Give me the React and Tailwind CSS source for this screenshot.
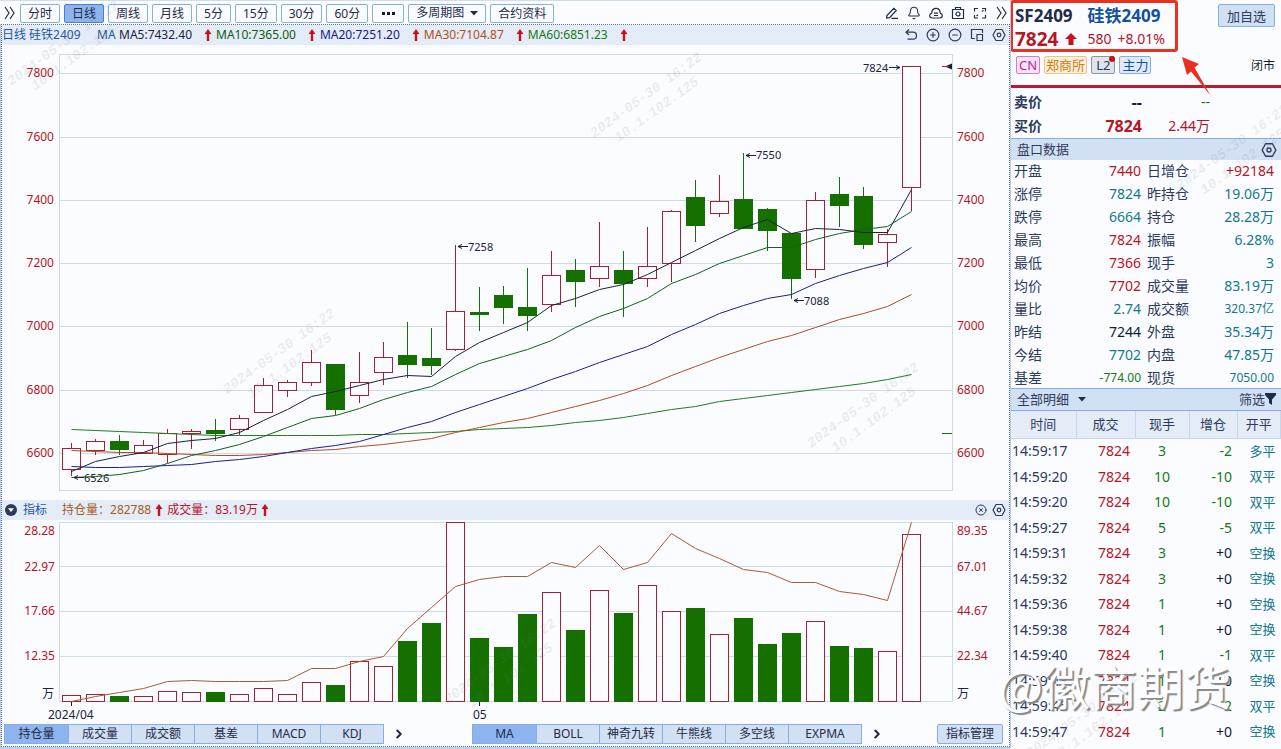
import { Bell, ChevronRight, CircleMinus, CirclePlus, CircleX } from "lucide-react";

const RED = "#a8202f";
const GREEN = "#157000";

const periods = ["分时", "日线", "周线", "月线", "5分", "15分", "30分", "60分"];

const averages = [
    { label: "MA5:7432.40", color: "text-[#1a2340]" },
    { label: "MA10:7365.00", color: "text-[#0f5d0f]" },
    { label: "MA20:7251.20", color: "text-[#16168a]" },
    { label: "MA30:7104.87", color: "text-[#b0501c]" },
    { label: "MA60:6851.23", color: "text-[#147a14]" },
];

// [up, high, top, bottom, low]
const candles = [
    [1, 443, 448, 469, 476],
    [1, 439, 441, 450, 455],
    [0, 435, 441, 450, 455],
    [1, 440, 445, 453, 454],
    [1, 429, 433, 454, 463],
    [1, 429, 431, 433, 449],
    [0, 419, 430, 434, 441],
    [1, 415, 418, 429, 435],
    [1, 378, 385, 412, 412],
    [1, 380, 382, 390, 397],
    [1, 350, 362, 382, 386],
    [0, 364, 364, 410, 415],
    [1, 352, 382, 395, 403],
    [1, 342, 357, 372, 385],
    [0, 322, 355, 365, 378],
    [0, 328, 358, 366, 375],
    [1, 245, 311, 349, 351],
    [0, 287, 312, 315, 331],
    [0, 286, 295, 308, 324],
    [0, 268, 307, 316, 331],
    [1, 251, 275, 304, 312],
    [0, 259, 270, 282, 307],
    [1, 222, 266, 278, 287],
    [0, 251, 270, 284, 317],
    [1, 227, 266, 278, 287],
    [1, 210, 211, 263, 282],
    [0, 180, 197, 226, 242],
    [1, 175, 201, 213, 217],
    [0, 153, 199, 229, 229],
    [0, 208, 209, 231, 251],
    [0, 233, 233, 279, 299],
    [1, 192, 200, 269, 278],
    [0, 177, 194, 206, 227],
    [0, 187, 196, 245, 249],
    [1, 229, 234, 242, 267],
    [1, 66, 66, 187, 211],
];

const lines = [
    {
        stroke: "#257d1c",
        ys: [429, 430, 431, 432, 433, 434, 435, 435, 435, 435, 435, 435, 434, 434, 433, 432, 431, 429, 428, 427, 425, 422, 420, 417, 413, 409, 406, 401, 398, 395, 392, 389, 386, 383, 379, 374],
    },
    {
        stroke: "#b0501c",
        ys: [450, 451, 452, 452, 453, 454, 455, 455, 454, 452, 450, 449, 446, 444, 441, 438, 432, 427, 422, 418, 412, 406, 400, 393, 385, 375, 366, 357, 349, 341, 335, 327, 319, 313, 306, 294],
    },
    {
        stroke: "#1d1d96",
        ys: [466, 467, 467, 466, 465, 464, 461, 459, 456, 452, 448, 445, 441, 434, 427, 421, 412, 404, 396, 388, 379, 371, 362, 354, 346, 334, 324, 313, 305, 298, 294, 283, 275, 268, 262, 247],
    },
    {
        stroke: "#176017",
        ys: [477, 476, 474, 470, 463, 455, 450, 444, 436, 427, 418, 415, 408, 399, 392, 386, 374, 363, 356, 349, 340, 327, 316, 308, 298, 283, 274, 263, 255, 247, 247, 239, 233, 229, 226, 211],
    },
    {
        stroke: "#1a2340",
        ys: [471, 461, 456, 452, 443, 440, 438, 432, 420, 409, 396, 391, 385, 379, 375, 376, 356, 342, 332, 322, 305, 298, 289, 284, 274, 262, 250, 238, 227, 219, 233, 228, 229, 232, 232, 189],
    },
];

const volumes = [695, 694, 696, 696, 691, 692, 692, 694, 688, 694, 682, 685, 661, 666, 641, 623, 522, 638, 647, 614, 592, 630, 590, 613, 585, 611, 608, 634, 618, 644, 633, 621, 646, 648, 651, 534];
const openInterest = [701, 696, 692, 688, 681, 680, 681, 681, 681, 680, 668, 668, 661, 656, 628, 607, 586, 579, 576, 576, 562, 567, 545, 569, 562, 533, 548, 558, 569, 572, 582, 582, 591, 594, 600, 522];

const priceTicks = [
    [7800, 73],
    [7600, 137],
    [7400, 200],
    [7200, 263],
    [7000, 326],
    [6800, 390],
    [6600, 453],
];

const volumeTicks = [
    ["28.28", "89.35", 531],
    ["22.97", "67.01", 567],
    ["17.66", "44.67", 611],
    ["12.35", "22.34", 656],
];

const quotes = [
    ["开盘", "7440", "red", "日增仓", "+92184", "red"],
    ["涨停", "7824", "teal", "昨持仓", "19.06万", "teal"],
    ["跌停", "6664", "teal", "持仓", "28.28万", "teal"],
    ["最高", "7824", "red", "振幅", "6.28%", "teal"],
    ["最低", "7366", "red", "现手", "3", "teal"],
    ["均价", "7702", "red", "成交量", "83.19万", "teal"],
    ["量比", "2.74", "teal", "成交额", "320.37亿", "tealSmall"],
    ["昨结", "7244", "dark", "外盘", "35.34万", "teal"],
    ["今结", "7702", "teal", "内盘", "47.85万", "teal"],
    ["基差", "-774.00", "green", "现货", "7050.00", "tealSmall"],
];

const tones = {
    red: "text-[#b81424] text-sm",
    teal: "text-[#14788c] text-sm",
    tealSmall: "text-[#14788c] text-xs",
    dark: "text-[#141c33] text-sm",
    green: "text-[#147a14] text-xs",
};

const trades = [
    ["14:59:17", 3, "-2", "多平"],
    ["14:59:20", 10, "-10", "双平"],
    ["14:59:20", 10, "-10", "双平"],
    ["14:59:27", 5, "-5", "双平"],
    ["14:59:31", 3, "+0", "空换"],
    ["14:59:32", 3, "+0", "空换"],
    ["14:59:36", 1, "+0", "空换"],
    ["14:59:38", 1, "+0", "空换"],
    ["14:59:40", 1, "-1", "双平"],
    ["14:59:43", 1, "+0", "空换"],
    ["14:59:45", 2, "-2", "双平"],
    ["14:59:47", 1, "+0", "空换"],
];

const stamps = [
    [11, 86],
    [594, 138],
    [227, 394],
    [811, 448],
    [448, 704],
    [1180, 190],
    [1030, 758],
];

const centerX = (i) => 71.5 + i * 24;
const toPoints = (ys) => ys.map((y, i) => `${centerX(i)},${y + 0.5}`).join(" ");

const Icon = ({ children, className = "size-[14px]" }) => (
    <svg
        viewBox="0 0 14 14"
        className={className}
        fill="none"
        stroke="currentColor"
        strokeWidth="1.2"
        aria-hidden="true"
    >
        {children}
    </svg>
);

const HexIcon = ({ className }) => (
    <Icon className={className}>
        <path d="M4 1.5h6L13 7l-3 5.5H4L1 7z" strokeLinejoin="round" />
        <circle cx="7" cy="7" r="1.8" />
    </Icon>
);

const DoubleChevron = () => (
    <Icon>
        <path d="M2 1l4 6-4 6M7 1l4 6-4 6" />
    </Icon>
);

const UpArrow = ({ className = "" }) => (
    <svg viewBox="0 0 8 12" className={`h-3 w-2 shrink-0 ${className}`} aria-hidden="true">
        <path d="M4 0 7.5 5H5.2v7H2.8V5H.5z" fill="#c4121f" />
    </svg>
);

const Caret = ({ className = "" }) => (
    <svg viewBox="0 0 8 5" className={`h-[5px] w-2 shrink-0 ${className}`} aria-hidden="true">
        <path d="M0 0h8L4 4.6z" fill="#1f2b48" />
    </svg>
);

const IconButton = ({ label, children }) => (
    <button type="button" aria-label={label} className="flex size-[14px] items-center justify-center">
        {children}
    </button>
);

const Toolbar = () => (
    <div className="flex h-6 items-center border-t border-[#cfdcee] px-px pt-px text-[#1f2b48]">
        <button type="button" aria-label="展开" className="mr-px w-[18px] pl-[2px]">
            <DoubleChevron />
        </button>
        <div className="flex gap-1 whitespace-nowrap">
            {periods.map((item) => (
                <button
                    key={item}
                    type="button"
                    className={`h-[19px] rounded-xs border px-[7px] leading-[17px] ${
                        item === "日线"
                            ? "border-[#4a80c8] bg-[#8db4ee]"
                            : "border-[#86b0dc] bg-[#fafcff]"
                    }`}
                >
                    {item}
                </button>
            ))}
            <button
                type="button"
                aria-label="更多周期"
                className="flex h-[19px] w-8 items-center justify-center gap-[2px] rounded-xs border border-[#86b0dc]"
            >
                <i className="size-[3px] bg-[#141c33]"></i>
                <i className="size-[3px] bg-[#141c33]"></i>
                <i className="size-[3px] bg-[#141c33]"></i>
            </button>
            <label className="flex h-[19px] items-center rounded-xs border border-[#86b0dc] px-[7px]">
                <select aria-label="多周期图" className="w-[54px] appearance-none outline-none">
                    <option>多周期图</option>
                </select>
                <Caret />
            </label>
            <button type="button" className="h-[19px] rounded-xs border border-[#86b0dc] px-[7px] leading-[17px]">
                合约资料
            </button>
        </div>
        <div className="ml-auto flex items-center gap-2">
            <IconButton label="画线">
                <Icon>
                    <path d="M2 9.5 8.8 2.3l2.4 2.2L4.6 11.600 1.600 12zM6.500 12.400H13" />
                </Icon>
            </IconButton>
            <IconButton label="预警">
                <Bell className="size-[14px]" strokeWidth={1.8} />
            </IconButton>
            <IconButton label="云">
                <Icon>
                    <path d="M3.400 12C1.700 12 .700 10.900.700 9.600c0-1.200.800-2.100 2-2.500C3 4.300 4.800 2.300 7 2.300s4 2 4.300 4.800c1.200.400 2 1.300 2 2.500 0 1.300-1 2.400-2.700 2.400zM5 7.200h4M5 9.500h4" />
                </Icon>
            </IconButton>
            <IconButton label="截图">
                <Icon>
                    <path d="M1.500 3.500h11v9h-11zM4.500 3.500v-2h5v2" />
                    <circle cx="7" cy="8" r="2" />
                </Icon>
            </IconButton>
            <IconButton label="全屏">
                <Icon>
                    <path d="M1.500 5.500v-3h3.500M9 2.500h3.500v3M12.500 9v3H9M5 12H1.500V9" />
                    <path d="M9 5.500l1.500-1.200M5 8.800l-1.500 1.200" />
                </Icon>
            </IconButton>
            <IconButton label="收起">
                <DoubleChevron />
            </IconButton>
        </div>
    </div>
);

const AverageBar = () => (
    <div className="flex h-5 items-center bg-[#e4ecf7] whitespace-nowrap">
        <span className="w-[95px] text-[#1d56a0]">日线 硅铁2409</span>
        <span className="w-[22px] text-[#1d56a0]">MA</span>
        {averages.map((item) => (
            <span key={item.label} className={`flex items-center ${item.color}`}>
                {item.label}
                <UpArrow className="ml-3 mr-1" />
            </span>
        ))}
        <div className="ml-auto flex gap-2 pr-[3px] text-[#2c3a5c]">
            <IconButton label="撤销">
                <Icon>
                    <path d="M5 1.500 2 4.200 5 7M2.200 4.200H9a3.400 3.400 0 0 1 0 7H3.500" />
                </Icon>
            </IconButton>
            <IconButton label="放大">
                <CirclePlus className="size-[14px]" strokeWidth={2} />
            </IconButton>
            <IconButton label="缩小">
                <CircleMinus className="size-[14px]" strokeWidth={2} />
            </IconButton>
            <IconButton label="窗口">
                <Icon>
                    <path d="M5 10.500H1.500v-9h11V5M7 6.500h5.500v6H7z" />
                </Icon>
            </IconButton>
            <IconButton label="设置">
                <HexIcon />
            </IconButton>
        </div>
    </div>
);

const PriceChart = () => (
    <svg viewBox="2 45 1007 455" className="block h-auto w-full" fill="none" role="img" aria-label="硅铁2409 日线">
        <g stroke="#cddae9" shapeRendering="crispEdges">
            <rect x="59.5" y="54.5" width="893" height="436" />
            {priceTicks.map(([price, y]) => (
                <path key={price} d={`M60 ${y + 0.5}H952`} />
            ))}
        </g>
        <g fontSize="12" fill="#b81424">
            {priceTicks.map(([price, y]) => (
                <g key={price}>
                    <text x="54" y={y + 4} textAnchor="end">{price}</text>
                    <text x="957" y={y + 4}>{price}</text>
                </g>
            ))}
        </g>
        <g shapeRendering="crispEdges">
            {candles.map(([up, high, top, bottom, low], i) => {
                const x = centerX(i);
                const color = up ? RED : GREEN;
                return (
                    <g key={i} stroke={color}>
                        <path d={`M${x} ${high}V${top}M${x} ${bottom}V${low}`} fill="none" />
                        <rect
                            x={x - 9}
                            y={top + 0.5}
                            width="18"
                            height={up ? bottom - top : bottom - top - 1}
                            fill={up ? "#fafcff" : color}
                        />
                    </g>
                );
            })}
        </g>
        {lines.map((line) => (
            <polyline key={line.stroke} points={toPoints(line.ys)} stroke={line.stroke} />
        ))}
        <g fontSize="11" fill="#1a2340">
            <text x="84" y="482">6526</text>
            <text x="468" y="251">7258</text>
            <text x="756" y="159">7550</text>
            <text x="804" y="305">7088</text>
            <text x="863" y="72">7824</text>
        </g>
        <path
            d="M84 477.5H74M78 475.5l-4 2 4 2M468 246.5H458M462 244.5l-4 2 4 2M756 155.5H746M750 153.5l-4 2 4 2M804 300.5H794M798 298.5l-4 2 4 2M889 67.5h11M896 65.5l4 2-4 2"
            stroke="#1a2340"
        />
        <path d="M945 66.5 952 63.5v6z" fill="#141c33" />
        <path d="M942 66.5h7" stroke={RED} />
        <path d="M942 433.5h10" stroke={GREEN} />
    </svg>
);

const IndicatorBar = () => (
    <div className="flex h-5 items-center bg-[#e4ecf7] pl-[3px] pr-[3px] whitespace-nowrap">
        <button type="button" aria-label="折叠指标" className="flex size-3 items-center justify-center rounded-full bg-[#2c3a5c]">
            <svg viewBox="0 0 8 5" className="h-1 w-[6px]" aria-hidden="true">
                <path d="M0 0h8L4 5z" fill="#fff" />
            </svg>
        </button>
        <span className="ml-[6px] text-[#1d56a0]">指标</span>
        <span className="ml-[15px] text-[#a85c1c]">持仓量：282788</span>
        <UpArrow className="mx-1" />
        <span className="text-[#b81424]">成交量：83.19万</span>
        <UpArrow className="ml-[3px]" />
        <div className="ml-auto flex gap-1 text-[#2c3a5c]">
            <IconButton label="关闭指标">
                <CircleX className="size-3" strokeWidth={2} />
            </IconButton>
            <IconButton label="指标设置">
                <HexIcon />
            </IconButton>
        </div>
    </div>
);

const VolumeChart = () => (
    <svg viewBox="2 520 1007 204" className="block h-auto w-full" fill="none" role="img" aria-label="成交量与持仓量">
        <g stroke="#cddae9" shapeRendering="crispEdges">
            <rect x="59.5" y="522.5" width="893" height="179" />
            <path d="M60 566.5H952M60 611.5H952M60 656.5H952" />
        </g>
        <g fontSize="12" fill="#b81424">
            {volumeTicks.map(([left, right, y]) => (
                <g key={left}>
                    <text x="55" y={y + 4} textAnchor="end">{left}</text>
                    <text x="957" y={y + 4}>{right}</text>
                </g>
            ))}
        </g>
        <g shapeRendering="crispEdges">
            {volumes.map((y, i) => (
                <rect
                    key={i}
                    x={centerX(i) - 9}
                    y={y + 0.5}
                    width="18"
                    height={701 - y}
                    stroke={candles[i][0] ? RED : GREEN}
                    fill={candles[i][0] ? "#fafcff" : GREEN}
                />
            ))}
            <path d="M71.5 702v4M479.5 702v4" stroke="#141c33" />
        </g>
        <polyline points={toPoints(openInterest)} stroke="#a85c2c" />
        <g fontSize="12" fill="#1a2340">
            <text x="42" y="698">万</text>
            <text x="957" y="698">万</text>
            <text x="48" y="719">2024/04</text>
            <text x="473" y="719">05</text>
        </g>
    </svg>
);

const TabGroup = ({ items }) => (
    <div className="flex h-5 border border-[#86aee2] bg-[#d2e0f4]" role="tablist">
        {items.map((item, index) => (
            <button
                key={item}
                type="button"
                role="tab"
                aria-selected={index === 0}
                className={`leading-[18px] ${item === "EXPMA" ? "w-[73px]" : "w-[63px]"} ${
                    index === 0 ? "bg-[#8db4ee]" : "border-l border-[#86aee2]"
                }`}
            >
                {item}
            </button>
        ))}
    </div>
);

const BottomTabs = () => (
    <div className="flex items-center pb-[2px] pl-[2px] pr-[6px] whitespace-nowrap text-[#1f2b48]">
        <TabGroup items={["持仓量", "成交量", "成交额", "基差", "MACD", "KDJ"]} />
        <button type="button" aria-label="更多指标" className="ml-2">
            <ChevronRight className="size-[14px]" strokeWidth={3.5} />
        </button>
        <div className="ml-[66px]">
            <TabGroup items={["MA", "BOLL", "神奇九转", "牛熊线", "多空线", "EXPMA"]} />
        </div>
        <button type="button" aria-label="更多主图指标" className="ml-2">
            <ChevronRight className="size-[14px]" strokeWidth={3.5} />
        </button>
        <button type="button" className="ml-auto h-5 rounded-xs border border-[#86aee2] bg-[#d2e0f4] px-2 leading-[18px]">
            指标管理
        </button>
    </div>
);

const QuoteHeader = () => (
    <header className="relative flex justify-between pb-[11px] pl-1 pr-[6px] pt-1 whitespace-nowrap">
        <div>
            <div className="flex gap-[15px] text-[17px] leading-[23px] font-bold">
                <span className="text-[#1f2b48]">SF2409</span>
                <span className="text-[#1450a0]">硅铁2409</span>
            </div>
            <div className="flex items-center text-sm leading-6 text-[#b81424]">
                <span className="text-[19px] font-bold">7824</span>
                <svg viewBox="0 0 12 12" className="ml-[7px] size-3" aria-hidden="true">
                    <path d="M6 0 12 6H8.500v6h-5V6H0z" fill="#c4121f" />
                </svg>
                <span className="ml-[10px]">580</span>
                <span className="ml-[6px]">+8.01%</span>
            </div>
            <div className="mt-[5px] flex gap-1 pl-px leading-4">
                <span className="rounded-xs border border-[#dc78c8] bg-[#fbe4f6] px-[2px] text-[13px] text-[#c020a0]">CN</span>
                <span className="rounded-xs border border-[#ecc48c] bg-[#fdf0dc] px-px text-[13px] text-[#d07c10]">郑商所</span>
                <span className="relative rounded-xs border border-[#8c96aa] bg-[#dfe4ec] px-1 text-[13px] text-[#2c3a5c]">
                    L2
                    <i className="absolute -top-px -right-px size-[6px] rounded-full bg-[#c4121f]"></i>
                </span>
                <span className="rounded-xs border border-[#86b0dc] bg-[#dfebfb] px-[2px] text-[13px] text-[#1450a0]">主力</span>
            </div>
        </div>
        <div className="flex flex-col items-end justify-between">
            <button type="button" className="h-[23px] rounded-xs border border-[#86b0dc] bg-[#d2e0f4] px-2 text-[13px] leading-5 text-[#2c3a5c]">
                加自选
            </button>
            <span className="text-[#141c33]">闭市</span>
        </div>
        <svg viewBox="1011 0 270 100" className="pointer-events-none absolute top-0 left-0 h-[100px] w-[270px] overflow-visible" aria-hidden="true">
            <rect x="1011.5" y="1.5" width="165" height="49" rx="2" fill="none" stroke="#e8321f" strokeWidth="3" />
            <path d="M1182 57l17 7-4.500 3.500L1210.500 95.500 1191 71.500l-4 3.500z" fill="#e8321f" />
        </svg>
    </header>
);

const SidePanel = () => (
    <aside className="relative w-[271px] shrink-0 overflow-hidden border-l border-[#b8cdea] text-[#2c3a5c]">
        <QuoteHeader />
        <div className="border-t-[3px] border-[#b41e30] pt-[2px]">
            <div className="flex h-6 items-center pl-[3px] text-sm">
                <b className="w-[60px]">卖价</b>
                <b className="w-[68px] text-right text-base text-[#141c33]">--</b>
                <span className="w-[68px] text-right text-[#147a14]">--</span>
            </div>
            <div className="flex h-6 items-center pl-[3px] text-sm text-[#b81424]">
                <b className="w-[60px] text-[#2c3a5c]">买价</b>
                <b className="w-[68px] text-right text-base">7824</b>
                <span className="w-[68px] text-right">2.44万</span>
            </div>
        </div>
        <div className="flex h-[22px] items-center justify-between border-t border-[#86aee2] bg-[#d2e0f4] pl-[6px] pr-1 text-[13px]">
            盘口数据
            <button type="button" aria-label="盘口设置">
                <HexIcon className="size-4" />
            </button>
        </div>
        <div className="grid gap-[3px] pt-px pl-[3px] pr-[7px] whitespace-nowrap">
            {quotes.map(([name, value, tone, name2, value2, tone2]) => (
                <div key={name} className="flex h-5 items-center text-sm">
                    <span className="w-[60px]">{name}</span>
                    <span className={`w-[67px] text-right ${tones[tone]}`}>{value}</span>
                    <span className="ml-[6px]">{name2}</span>
                    <span className={`ml-auto ${tones[tone2]}`}>{value2}</span>
                </div>
            ))}
        </div>
        <div className="flex h-[23px] items-center justify-between border-y border-[#86aee2] bg-[#d2e0f4] pl-[6px] pr-[5px] text-[13px]">
            <label className="flex items-center">
                <select aria-label="明细类型" className="w-[61px] appearance-none outline-none">
                    <option>全部明细</option>
                </select>
                <Caret />
            </label>
            <button type="button" className="flex items-center">
                筛选
                <svg viewBox="0 0 11 12" className="h-3 w-[11px]" aria-hidden="true">
                    <path d="M0 0h11v2L7 6.500V12L4 10V6.500L0 2z" fill="#1f2b48" />
                </svg>
            </button>
        </div>
        <table className="w-full table-fixed border-collapse text-sm whitespace-nowrap">
            <colgroup>
                <col className="w-[65px]" />
                <col className="w-[59px]" />
                <col className="w-[54px]" />
                <col className="w-[48px]" />
                <col />
            </colgroup>
            <thead>
                <tr className="h-[27px] bg-[#e4ecf7] text-[13px]">
                    {["时间", "成交", "现手", "增仓", "开平"].map((item) => (
                        <th key={item} className="border-r border-b border-[#c6d6ec] p-0 font-normal">
                            {item}
                        </th>
                    ))}
                </tr>
            </thead>
            <tbody>
                {trades.map(([time, lots, change, kind], index) => (
                    <tr key={index} className="odd:h-[26px] even:h-[25px]">
                        <td className="p-0 pl-px">{time}</td>
                        <td className="p-0 pr-[5px] text-right text-[#b81424]">7824</td>
                        <td className="p-0 text-center text-[#147a14]">{lots}</td>
                        <td className={`p-0 pr-[5px] text-right ${change === "+0" ? "text-[#141c33]" : "text-[#147a14]"}`}>
                            {change}
                        </td>
                        <td className="p-0 pr-[5px] text-right text-[13px] text-[#14788c]">{kind}</td>
                    </tr>
                ))}
            </tbody>
        </table>
    </aside>
);

const Watermarks = () => (
    <div className="pointer-events-none absolute inset-0 overflow-hidden">
        <svg className="absolute inset-0 size-full" aria-hidden="true">
            <g fontFamily="Liberation Mono" fontStyle="italic" fontWeight="bold" fontSize="14" fill="#6b7280" fillOpacity="0.13">
                {stamps.map(([x, y]) => (
                    <g key={`${x}-${y}`} transform={`translate(${x} ${y}) rotate(-36)`} style={{ whiteSpace: "pre" }}>
                        <text>{"2024-05-30  16:22"}</text>
                        <text x="17" y="18">10.1.102.125</text>
                    </g>
                ))}
            </g>
        </svg>
        <span className="absolute right-[50px] bottom-[34px] font-['Noto_Sans_CJK_SC',sans-serif] text-[47px] leading-[60px] whitespace-nowrap text-[#fcfdff] [text-shadow:2px_2px_1px_#888]">
            @徽商期货
        </span>
    </div>
);

const App = () => {
    return (
        <div className="relative flex min-h-screen overflow-hidden bg-[#fafcff] font-['Noto_Sans','Noto_Sans_CJK_SC',sans-serif] text-xs">
            <main className="flex min-w-0 flex-1 flex-col bg-[#fafcff]">
                <Toolbar />
                <section className="flex-1 border-l border-[#b8cdea]">
                    <div className="border border-dotted border-[#5f6f94]">
                        <AverageBar />
                        <PriceChart />
                        <IndicatorBar />
                        <VolumeChart />
                        <BottomTabs />
                    </div>
                    <div className="h-[2px] bg-[#b8d0f0]"></div>
                </section>
            </main>
            <SidePanel />
            <Watermarks />
        </div>
    );
};

export default App;
